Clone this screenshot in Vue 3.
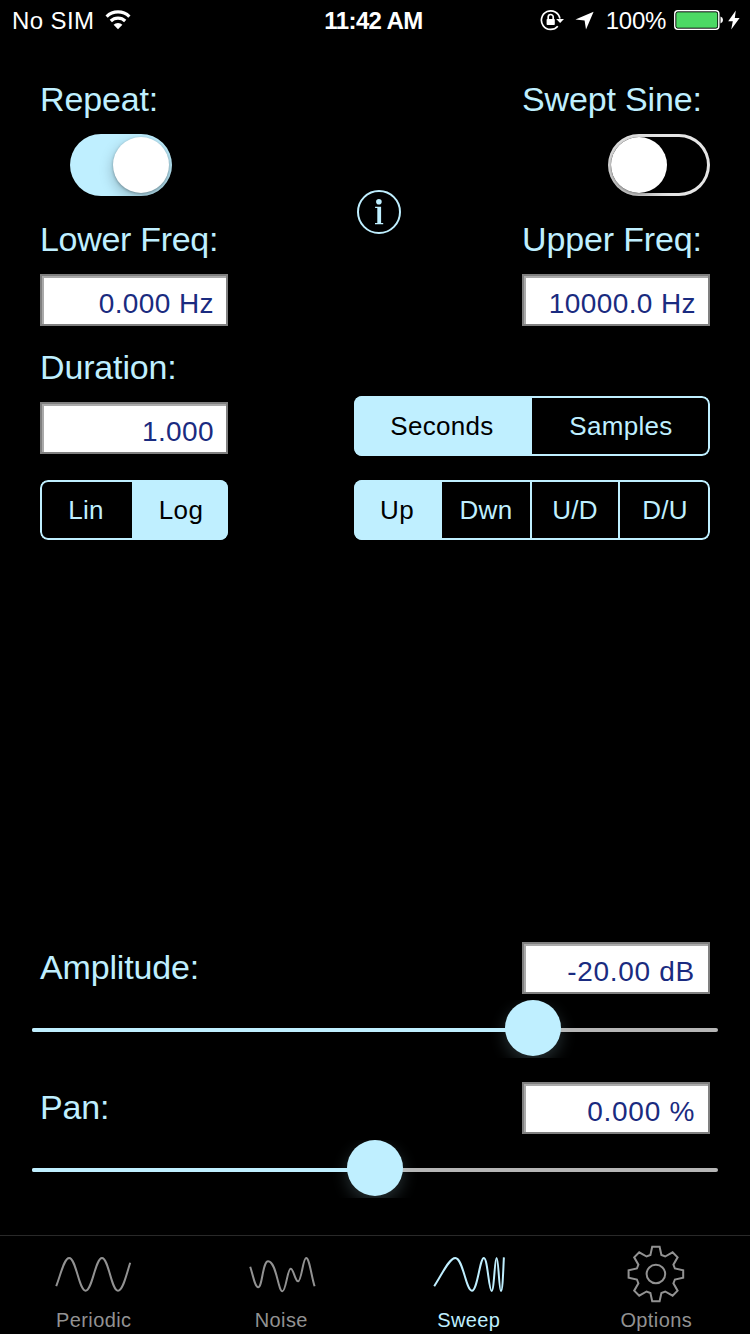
<template>
  <div class="screen">
    <header class="status-bar">
      <div class="status-left">
        <span class="carrier">No SIM</span>
        <svg class="wifi" width="26" height="20" viewBox="0 0 26 20">
          <path d="M1.6 6.6 A16.3 16.3 0 0 1 24.4 6.6" />
          <path d="M5.8 11 A10.3 10.3 0 0 1 20.2 11" />
          <path class="solid" d="M13 19.2 L8.6 14.8 A6 6 0 0 1 17.4 14.8 Z" />
        </svg>
      </div>
      <span class="time">11:42 AM</span>
      <div class="status-right">
        <svg width="25" height="22" viewBox="0 0 25 22">
          <path class="ring" d="M17.8 17.2 A9.3 9.3 0 1 1 19.9 9.7" />
          <path class="solid" d="M16.2 10 H24 L20.1 14 Z" />
          <rect class="solid" x="6.6" y="10" width="8.2" height="6" rx="0.8" />
          <path class="shackle" d="M8.2 10.5 V8 A2.5 2.5 0 0 1 13.2 8 V10.5" />
        </svg>
        <svg class="location" width="19" height="20" viewBox="0 0 19 20">
          <path class="solid" d="M18.6 1.8 L0.4 9.6 L9.6 10.6 L11 19.6 Z" />
        </svg>
        <span class="percent">100%</span>
        <svg class="battery" width="50" height="20" viewBox="0 0 50 20">
          <rect class="shell" x="0.8" y="0.8" width="44" height="18.4" rx="3" />
          <rect class="charge" x="2" y="2" width="41.6" height="16" rx="1.8" />
          <path class="solid" d="M46.5 6.6 Q49 7.4 49 10 Q49 12.6 46.5 13.4 Z" />
        </svg>
        <svg class="bolt" width="12" height="20" viewBox="0 0 12 20">
          <path class="solid" d="M7.8 0.4 L0.2 11.2 H4.8 L3.2 19.4 L11.6 8 H6.8 Z" />
        </svg>
      </div>
    </header>

    <main>
      <section class="top">
        <div class="column">
          <label>Repeat:</label>
          <button class="switch" :class="{ on: repeat }" @click="repeat = !repeat"><i></i></button>
          <label class="lower">Lower Freq:</label>
          <div class="field">0.000 Hz</div>
        </div>
        <button class="info">
          <svg width="44" height="44" viewBox="0 0 44 44">
            <circle class="info-ring" cx="22" cy="22" r="21" />
            <circle cx="21.9" cy="11.7" r="2.8" />
            <path d="M18.1 16.8 H24.1 V33 H26.2 V34.2 H18 V33 H20.3 V18 H18.1 Z" />
          </svg>
        </button>
        <div class="column">
          <label>Swept Sine:</label>
          <button class="switch right" :class="{ on: sweptSine }" @click="sweptSine = !sweptSine"><i></i></button>
          <label>Upper Freq:</label>
          <div class="field">10000.0 Hz</div>
        </div>
      </section>

      <section class="settings">
        <div class="column">
          <label>Duration:</label>
          <div class="field">1.000</div>
          <div class="segments scale">
            <button v-for="s in scales" :key="s" :class="{ active: s === scale }" @click="scale = s">{{ s }}</button>
          </div>
        </div>
        <div class="choices">
          <div class="segments units">
            <button v-for="u in units" :key="u" :class="{ active: u === unit }" @click="unit = u">{{ u }}</button>
          </div>
          <div class="segments directions">
            <button v-for="d in directions" :key="d" :class="{ active: d === direction }" @click="direction = d">{{ d }}</button>
          </div>
        </div>
      </section>

      <section class="levels">
        <div v-for="level in levels" :key="level.name" class="level">
          <div class="level-head">
            <label>{{ level.name }}:</label>
            <div class="field">{{ level.text }}</div>
          </div>
          <div class="slider">
            <div class="track">
              <div class="fill" :style="{ width: level.position + '%' }"></div>
            </div>
            <div class="knob" :style="{ left: level.position + '%' }"></div>
          </div>
        </div>
      </section>
    </main>

    <nav class="tabs">
      <a v-for="t in tabs" :key="t.name" :class="{ active: t.name === tab }" @click="tab = t.name">
        <svg width="88" height="60" viewBox="0 0 88 60">
          <path :d="t.icon" />
          <circle v-if="t.name === 'Options'" cx="43.9" cy="30" r="9.3" />
        </svg>
        <span>{{ t.name }}</span>
      </a>
    </nav>
  </div>
</template>

<script setup>
import { ref } from 'vue';

const repeat = ref(true);
const sweptSine = ref(false);

const scales = ['Lin', 'Log'];
const scale = ref('Log');

const units = ['Seconds', 'Samples'];
const unit = ref('Seconds');

const directions = ['Up', 'Dwn', 'U/D', 'D/U'];
const direction = ref('Up');

// position is the knob centre in percent of the track
const levels = ref([
  { name: 'Amplitude', text: '-20.00 dB', position: 73.03 },
  { name: 'Pan', text: '0.000 %', position: 50 }
]);

const tab = ref('Sweep');
const tabs = [
  {
    name: 'Periodic',
    icon: 'M6.2 42.2 C11 30 14 14 19.2 14 C26 14 29 46.7 35.6 46.7 C42.2 46.7 45.4 14 52 14 C58.6 14 61.4 46.7 68 46.7 C73 46.7 76.2 31 80.2 18.8'
  },
  {
    name: 'Noise',
    icon: 'M13.2 22.8 C16 31 18 43.3 21.1 43.3 C25.5 43.3 25.5 17.3 31.1 17.3 C39.5 17.3 41 47.3 45.4 47.3 C49 47.3 50.4 24.7 53.7 24.7 C56.6 24.7 58 37.3 61.1 37.3 C64.5 37.3 66 14 69.1 14 C72.5 14 74.5 33 77.6 42.2'
  },
  {
    name: 'Sweep',
    icon: 'M9.2 42.2 C16.5 31.5 24 14 30.3 14 C38 14 41 46.7 46.9 46.7 C52.5 46.7 54.8 14 58.9 14 C62.6 14 63.8 46.9 66.6 46.9 C69.2 46.9 69.6 14 71.6 14 C73.6 14 74 46.9 75.9 46.9 C77.8 46.9 78.2 25 78.9 13.4'
  },
  {
    name: 'Options',
    icon: 'M40.2 2.7 H47.6 L49.4 11 L53.2 12.5 L60.6 8.3 L65.6 13.3 L61.4 20.7 L62.9 24.5 L71.2 26.3 V33.7 L62.9 35.5 L61.4 39.3 L65.6 46.7 L60.6 51.7 L53.2 47.5 L49.4 49 L47.6 57.3 H40.2 L38.4 49 L34.6 47.5 L27.2 51.7 L22.2 46.7 L26.4 39.3 L24.9 35.5 L16.6 33.7 V26.3 L24.9 24.5 L26.4 20.7 L22.2 13.3 L27.2 8.3 L34.6 12.5 L38.4 11 Z'
  }
];
</script>

<style>
body {
  background: #000;
}
</style>

<style scoped>
.screen {
  width: 750px;
  height: 1334px;
  display: flex;
  flex-direction: column;
  overflow: hidden;
  background: #000;
  color: #bfefff;
  font-family: "Liberation Sans", Arial, sans-serif;
}

svg {
  display: block;
}

button {
  padding: 0;
  border: 0;
  background: none;
  color: inherit;
  font: inherit;
}

.status-bar {
  display: grid;
  grid-template-columns: 1fr auto 1fr;
  align-items: center;
  height: 40px;
  padding: 0 10px 0 12px;
  color: #fff;
  font-size: 24px;
  line-height: 40px;
}

.status-left,
.status-right {
  display: flex;
  align-items: center;
}

.status-right {
  justify-content: flex-end;
}

.status-bar span {
  height: 40px;
  padding-top: 1px;
  box-sizing: border-box;
}

.carrier {
  letter-spacing: 0.4px;
}

.time {
  margin-right: 5px;
  font-weight: bold;
  letter-spacing: -0.6px;
}

.wifi {
  margin-left: 11px;
}

.status-bar path,
.status-bar rect {
  fill: none;
  stroke: #fff;
}

.wifi path {
  stroke-width: 3.2;
}

.status-bar .solid {
  fill: #fff;
  stroke: none;
}

.ring,
.shackle {
  stroke-width: 1.7;
}

.location {
  margin-left: 10px;
}

.percent {
  margin-left: 12px;
  letter-spacing: -0.3px;
}

.battery {
  margin-left: 8px;
}

.status-bar .shell {
  stroke-width: 1.5;
}

.status-bar .charge {
  fill: #4cd964;
  stroke: #000;
  stroke-width: 0.6;
}

.bolt {
  margin-left: 4px;
}

main {
  flex: 1;
  display: flex;
  flex-direction: column;
  padding: 39px 40px 0;
}

.top,
.settings {
  display: flex;
  justify-content: space-between;
}

.column {
  width: 188px;
}

label {
  display: block;
  height: 40px;
  font-size: 34px;
  line-height: 40px;
  letter-spacing: -0.15px;
  white-space: nowrap;
}

.lower {
  letter-spacing: -0.3px;
}

.switch {
  display: block;
  width: 102px;
  height: 62px;
  margin: 15px 0 23px 30px;
  padding: 3px;
  border-radius: 31px;
  box-shadow: inset 0 0 0 3px #e5e5e5;
  overflow: hidden;
}

.switch i {
  display: block;
  width: 56px;
  height: 56px;
  border-radius: 50%;
  background: #fff;
  box-shadow: 0 5px 14px rgba(0, 0, 0, 0.25), 0 1px 3px rgba(0, 0, 0, 0.3);
}

.switch.right {
  margin-left: 86px;
}

.switch.on {
  background: #bfefff;
  box-shadow: none;
}

.switch.on i {
  margin-left: 40px;
}

.field {
  box-sizing: border-box;
  width: 188px;
  height: 52px;
  padding-right: 12px;
  border: 2px solid #808080;
  box-shadow: inset 2px 2px 0 #aaa;
  background: #fff;
  color: #1a2b80;
  font-size: 28px;
  line-height: 56px;
  letter-spacing: 0.4px;
  text-align: right;
}

.column .field {
  margin-top: 15px;
}

.level .field {
  padding-right: 13px;
  letter-spacing: 0.7px;
}

.info {
  width: 44px;
  height: 44px;
  margin: 111px 0 0 8px;
}

.info svg {
  fill: #bfefff;
}

.info-ring {
  fill: none;
  stroke: #bfefff;
  stroke-width: 2;
}

.settings {
  margin-top: 21px;
}

.choices {
  display: flex;
  flex-direction: column;
  gap: 24px;
  width: 356px;
  padding-top: 49px;
}

.segments {
  position: relative;
  display: grid;
  height: 60px;
  border-radius: 8px;
  overflow: hidden;
}

/* outline sits over the filled segment */
.segments::after {
  content: "";
  position: absolute;
  inset: 0;
  border: 2px solid #bfefff;
  border-radius: 8px;
  pointer-events: none;
}

.segments.scale {
  grid-template-columns: 94px 94px;
  margin-top: 26px;
}

.segments.units {
  grid-template-columns: 178px 178px;
}

.segments.directions {
  grid-template-columns: 88px 90px 88px 90px;
}

.segments button {
  font-size: 26px;
  letter-spacing: 0.3px;
}

.segments button:not(:last-child) {
  border-right: 2px solid #bfefff;
}

.segments .active {
  background: #bfefff;
  color: #000;
}

.levels {
  margin-top: auto;
}

.level {
  height: 140px;
}

.level-head {
  display: flex;
  justify-content: space-between;
}

.level-head label {
  margin-top: 5px;
}

/* 58px tall so the glow under the knob is cut off */
.slider {
  position: relative;
  height: 58px;
  margin: 6px -8px 0;
  overflow: hidden;
}

.track {
  height: 4px;
  margin-top: 28px;
  border-radius: 2px;
  background: #b6b6b6;
  overflow: hidden;
}

.fill {
  height: 100%;
  background: #bfefff;
}

.knob {
  position: absolute;
  top: 0;
  width: 56px;
  height: 56px;
  margin-left: -28px;
  border-radius: 50%;
  background: #bfefff;
  box-shadow: 0 6px 16px rgba(191, 239, 255, 0.2);
}

.tabs {
  box-sizing: border-box;
  display: flex;
  height: 99px;
  margin-top: 13px;
  border-top: 1px solid #292929;
}

.tabs a {
  flex: 1;
  display: flex;
  flex-direction: column;
  align-items: center;
  padding-top: 8px;
  color: #929292;
  font-size: 20px;
  line-height: 24px;
}

.tabs svg {
  fill: none;
  stroke: currentColor;
  stroke-width: 2;
}

.tabs span {
  margin: 4px 0 0;
  letter-spacing: 0.4px;
}

.tabs .active {
  color: #bfefff;
}
</style>
